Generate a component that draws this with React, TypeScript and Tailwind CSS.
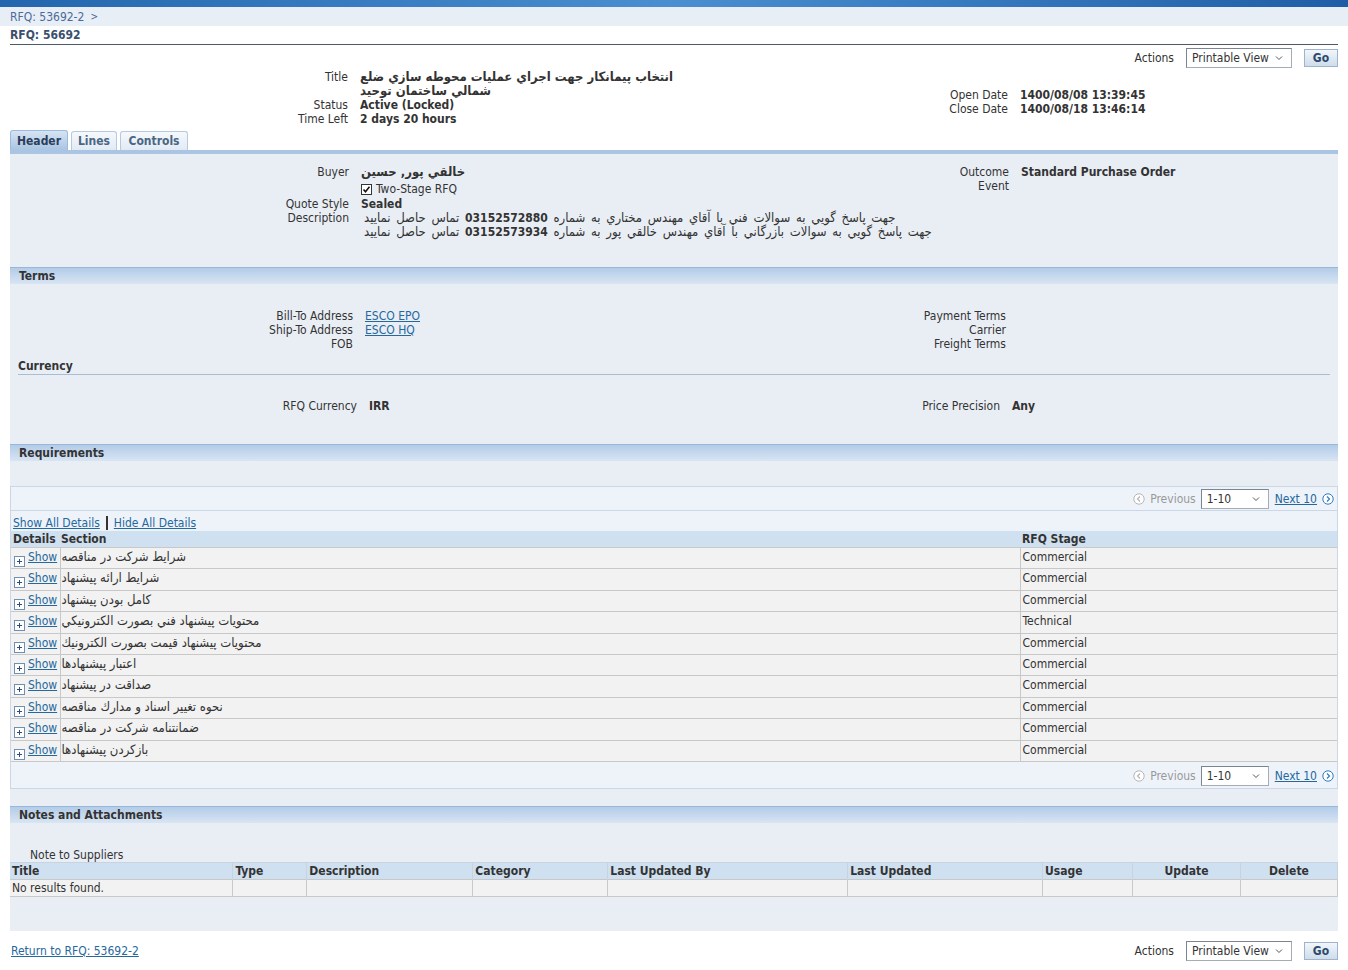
import React from 'react'

const requirements = [
  { section: 'شرايط شركت در مناقصه', stage: 'Commercial' },
  { section: 'شرايط ارائه پيشنهاد', stage: 'Commercial' },
  { section: 'كامل بودن پيشنهاد', stage: 'Commercial' },
  { section: 'محتويات پيشنهاد فني بصورت الكترونيكي', stage: 'Technical' },
  { section: 'محتويات پيشنهاد قيمت بصورت الكترونيك', stage: 'Commercial' },
  { section: 'اعتبار پيشنهادها', stage: 'Commercial' },
  { section: 'صداقت در پيشنهاد', stage: 'Commercial' },
  { section: 'نحوه تغيير اسناد و مدارك مناقصه', stage: 'Commercial' },
  { section: 'ضمانتنامه شركت در مناقصه', stage: 'Commercial' },
  { section: 'بازكردن پيشنهادها', stage: 'Commercial' },
]

const noteCols = [
  { name: 'Title', w: 'w-[223px]', center: false },
  { name: 'Type', w: 'w-[74px]', center: false },
  { name: 'Description', w: 'w-[166px]', center: false },
  { name: 'Category', w: 'w-[135px]', center: false },
  { name: 'Last Updated By', w: 'w-[240px]', center: false },
  { name: 'Last Updated', w: 'w-[195px]', center: false },
  { name: 'Usage', w: 'w-[90px]', center: false },
  { name: 'Update', w: 'w-[108px]', center: true },
  { name: 'Delete', w: 'w-[97px]', center: true },
]

function SectionBar({ title }: { title: string }) {
  return (
    <div className="h-[17px] border-t border-[#98b7db] bg-gradient-to-b from-[#b3cce8] to-[#d8e5f3] px-[9px] text-[12px] font-bold leading-[16px] text-[#333]">
      {title}
    </div>
  )
}

function Select({ value, w }: { value: string; w: string }) {
  return (
    <div className={`${w} flex h-[20px] items-center justify-between border border-[#a5acb5] border-t-[#7a8591] border-l-[#7a8591] bg-white pl-[5px] pr-[8px] text-[12px] text-[#333]`}>
      <span>{value}</span>
      <svg width="8" height="6" viewBox="0 0 8 6">
        <path d="M1 1.5 L4 4.5 L7 1.5" fill="none" stroke="#555" strokeWidth="1" />
      </svg>
    </div>
  )
}

function GoButton() {
  return (
    <button className="flex h-[18px] w-[34px] items-center justify-center border border-[#9fb4cc] bg-gradient-to-b from-[#f1f6fb] to-[#cfdceb] text-[12px] font-bold text-[#2d4a6b]">
      Go
    </button>
  )
}

function ActionsRow() {
  return (
    <div className="flex items-center justify-end">
      <span className="mr-[12px] text-[12px] text-[#333]">Actions</span>
      <Select value="Printable View" w="w-[106px]" />
      <div className="ml-[12px]">
        <GoButton />
      </div>
    </div>
  )
}

function CircleArrow({ dir, active }: { dir: 'l' | 'r'; active: boolean }) {
  const c = active ? '#2f7ac0' : '#b5b5b5'
  return (
    <svg width="12" height="12" viewBox="0 0 12 12">
      <circle cx="6" cy="6" r="5.2" fill="white" stroke={c} strokeWidth="1" />
      <path d={dir === 'l' ? 'M7 3.5 L4.5 6 L7 8.5' : 'M5 3.5 L7.5 6 L5 8.5'} fill="none" stroke={c} strokeWidth="1.2" />
    </svg>
  )
}

function Pager({ extra }: { extra: string }) {
  return (
    <div className={`flex items-center justify-end gap-[5px] pr-[3px] ${extra}`}>
      <CircleArrow dir="l" active={false} />
      <span className="text-[12px] text-[#999]">Previous</span>
      <Select value="1-10" w="w-[68px]" />
      <a className="ml-[1px] text-[12px] text-[#25689d] underline">Next 10</a>
      <CircleArrow dir="r" active />
    </div>
  )
}

function PlusBox() {
  return (
    <svg width="11" height="11" viewBox="0 0 11 11" className="mt-[6px] shrink-0">
      <rect x="0.5" y="0.5" width="10" height="10" fill="white" stroke="#6f8fb3" />
      <path d="M3 5.5 H8 M5.5 3 V8" stroke="#2c4f80" strokeWidth="1" />
    </svg>
  )
}

export default function App() {
  const lbl = 'text-right text-[#333]'
  return (
    <div className="min-h-screen bg-white font-['DejaVu_Sans_Condensed','DejaVu_Sans',sans-serif] text-[12px] leading-[14px] text-[#333]">
      {/* top strip */}
      <div className="h-[7px] bg-gradient-to-r from-[#2466ad] via-[#4a8fd2] to-[#1f5ea6]" />
      {/* breadcrumb */}
      <div className="flex h-[19px] items-center bg-[#e8eef5] px-[10px] pt-[1px] text-[12px] text-[#4a6a9a]">
        RFQ: 53692-2 <span className="ml-[6px] text-[10px]">&gt;</span>
      </div>

      <div className="px-[10px]">
        <div className="flex h-[19px] items-end border-b border-[#4c5a6a] pb-[2px] text-[12px] font-bold text-[#3b4f6e]">
          RFQ: 56692
        </div>

        <div className="mt-[3px]">
          <ActionsRow />
        </div>

        {/* title block */}
        <div className="mt-[2px] flex">
          <div className="grid w-[660px] grid-cols-[338px_auto] gap-x-[12px]">
            <div className={lbl}>Title</div>
            <div className="whitespace-nowrap text-[13px] font-bold">
              انتخاب پيمانكار جهت اجراي عمليات محوطه سازي ضلع
              <br />
              شمالي ساختمان توحيد
            </div>
            <div className={lbl}>Status</div>
            <div className="font-bold">Active (Locked)</div>
            <div className={lbl}>Time Left</div>
            <div className="font-bold">2 days 20 hours</div>
          </div>
          <div className="mt-[18px] grid h-fit grid-cols-[338px_auto] gap-x-[12px]">
            <div className={lbl}>Open Date</div>
            <div className="font-bold">1400/08/08 13:39:45</div>
            <div className={lbl}>Close Date</div>
            <div className="font-bold">1400/08/18 13:46:14</div>
          </div>
        </div>

        {/* tabs */}
        <div className="mt-[4px] flex h-[20px] items-end gap-[3px]">
          <div className="flex h-[20px] w-[58px] items-center justify-center rounded-t-[3px] border border-b-0 border-[#9cbbdc] bg-gradient-to-b from-[#d6e4f3] to-[#a9c5e3] font-bold text-[#2c3e5a]">
            Header
          </div>
          <div className="flex h-[19px] w-[46px] items-center justify-center rounded-t-[3px] border border-b-0 border-[#b5c9e0] bg-gradient-to-b from-[#f6f9fc] to-[#e1eaf4] font-bold text-[#4b6584]">
            Lines
          </div>
          <div className="flex h-[19px] w-[68px] items-center justify-center rounded-t-[3px] border border-b-0 border-[#b5c9e0] bg-gradient-to-b from-[#f6f9fc] to-[#e1eaf4] font-bold text-[#4b6584]">
            Controls
          </div>
        </div>
        <div className="h-[4px] bg-[#a9c5e3]" />

        <div className="bg-[#e9eef5]">
          {/* header content */}
          <div className="flex h-[113px] pt-[11px]">
            <div className="grid h-fit w-[660px] grid-cols-[339px_auto] gap-x-[12px]">
              <div className={lbl}>Buyer</div>
              <div className="text-[13px] font-bold">خالقي پور, حسين</div>
              <div />
              <div className="flex h-[18px] items-center gap-[4px] pt-[2px]">
                <svg width="11" height="11" viewBox="0 0 11 11">
                  <rect x="0.5" y="0.5" width="10" height="10" fill="white" stroke="#333" />
                  <path d="M2.5 5.5 L4.5 7.8 L8.5 2.8" fill="none" stroke="#111" strokeWidth="1.6" />
                </svg>
                <span>Two-Stage RFQ</span>
              </div>
              <div className={lbl}>Quote Style</div>
              <div className="font-bold">Sealed</div>
              <div className={lbl}>Description</div>
              <div className="whitespace-nowrap pl-[3px] text-[13px] [word-spacing:2px]">
                <div>
                  جهت پاسخ گويي به سوالات فني با آقاي مهندس مختاري به شماره <b className="text-[12px]">03152572880</b> تماس حاصل نماييد
                </div>
                <div>
                  جهت پاسخ گويي به سوالات بازرگاني با آقاي مهندس خالقي پور به شماره <b className="text-[12px]">03152573934</b> تماس حاصل نماييد
                </div>
              </div>
            </div>
            <div className="grid h-fit grid-cols-[339px_auto] gap-x-[12px]">
              <div className={lbl}>Outcome</div>
              <div className="font-bold">Standard Purchase Order</div>
              <div className={lbl}>Event</div>
              <div />
            </div>
          </div>

          <SectionBar title="Terms" />
          <div className="h-[160px] pt-[25px]">
            <div className="flex">
              <div className="grid h-fit w-[660px] grid-cols-[343px_auto] gap-x-[12px]">
                <div className={lbl}>Bill-To Address</div>
                <a className="text-[#25689d] underline">ESCO EPO</a>
                <div className={lbl}>Ship-To Address</div>
                <a className="text-[#25689d] underline">ESCO HQ</a>
                <div className={lbl}>FOB</div>
                <div />
              </div>
              <div className="grid h-fit grid-cols-[336px_auto] gap-x-[12px]">
                <div className={lbl}>Payment Terms</div>
                <div />
                <div className={lbl}>Carrier</div>
                <div />
                <div className={lbl}>Freight Terms</div>
                <div />
              </div>
            </div>
            <div className="mx-[8px] mt-[8px] border-b border-[#a9bdd4] pb-[1px] font-bold">Currency</div>
            <div className="mt-[24px] flex">
              <div className="grid h-fit w-[660px] grid-cols-[347px_auto] gap-x-[12px]">
                <div className={lbl}>RFQ Currency</div>
                <div className="font-bold">IRR</div>
              </div>
              <div className="grid h-fit grid-cols-[330px_auto] gap-x-[12px]">
                <div className={lbl}>Price Precision</div>
                <div className="font-bold">Any</div>
              </div>
            </div>
          </div>

          <SectionBar title="Requirements" />
          <div className="h-[25px]" />
          <div className="border border-[#c9d7e7] bg-[#eef3fa]">
            <Pager extra="h-[24px] border-b border-[#c9d7e7]" />
            <div className="flex h-[20px] items-end pb-[1px] pl-[2px] text-[#25689d]">
              <a className="underline">Show All Details</a>
              <span className="mx-[6px] h-[14px] w-[2px] bg-[#333]" />
              <a className="underline">Hide All Details</a>
            </div>
            <table className="w-full border-collapse text-left">
              <thead>
                <tr className="h-[16px] bg-[#cfe0f1] font-bold">
                  <th className="w-[49px] px-[2px] font-bold leading-[16px]">Details</th>
                  <th className="px-[1px] font-bold leading-[16px]">Section</th>
                  <th className="w-[317px] px-[2px] font-bold leading-[16px]">RFQ Stage</th>
                </tr>
              </thead>
              <tbody>
                {requirements.map((r, i) => (
                  <tr key={i} className="h-[21.4px] bg-[#f2f2f2]">
                    <td className="border border-l-0 border-[#c8c8c8] p-0 align-top">
                      <div className="flex items-start gap-[3px] pl-[3px] pt-[2px]">
                        <PlusBox />
                        <a className="text-[#25689d] underline">Show</a>
                      </div>
                    </td>
                    <td className="border border-[#c8c8c8] px-[1px] pt-[2px] align-top">
                      <span className="text-[13px]">{r.section}</span>
                    </td>
                    <td className="border border-r-0 border-[#c8c8c8] px-[2px] pt-[2px] align-top">{r.stage}</td>
                  </tr>
                ))}
              </tbody>
            </table>
            <Pager extra="h-[26px] pt-[2px]" />
          </div>
          <div className="h-[17px]" />

          <SectionBar title="Notes and Attachments" />
          <div className="h-[108px]">
            <div className="pl-[20px] pt-[25px] leading-[14px]">Note to Suppliers</div>
            <table className="w-full border-collapse text-left">
              <thead>
                <tr className="h-[17px] bg-[#cfe0f1]">
                  {noteCols.map((c) => (
                    <th
                      key={c.name}
                      className={`${c.w} border-t border-r border-[#c8d3df] px-[2px] font-bold leading-[16px] ${c.center ? 'text-center' : ''}`}
                    >
                      {c.name}
                    </th>
                  ))}
                </tr>
              </thead>
              <tbody>
                <tr className="h-[17px] bg-[#f2f2f2]">
                  {noteCols.map((c, i) => (
                    <td key={c.name} className="border-y border-r border-[#c8c8c8] px-[2px] leading-[16px]">
                      {i === 0 ? 'No results found.' : ''}
                    </td>
                  ))}
                </tr>
              </tbody>
            </table>
          </div>
        </div>

        {/* footer */}
        <div className="mt-[10px] flex items-center justify-between pb-[8px]">
          <a className="pl-[1px] text-[#25689d] underline">Return to RFQ: 53692-2</a>
          <ActionsRow />
        </div>
      </div>
    </div>
  )
}
